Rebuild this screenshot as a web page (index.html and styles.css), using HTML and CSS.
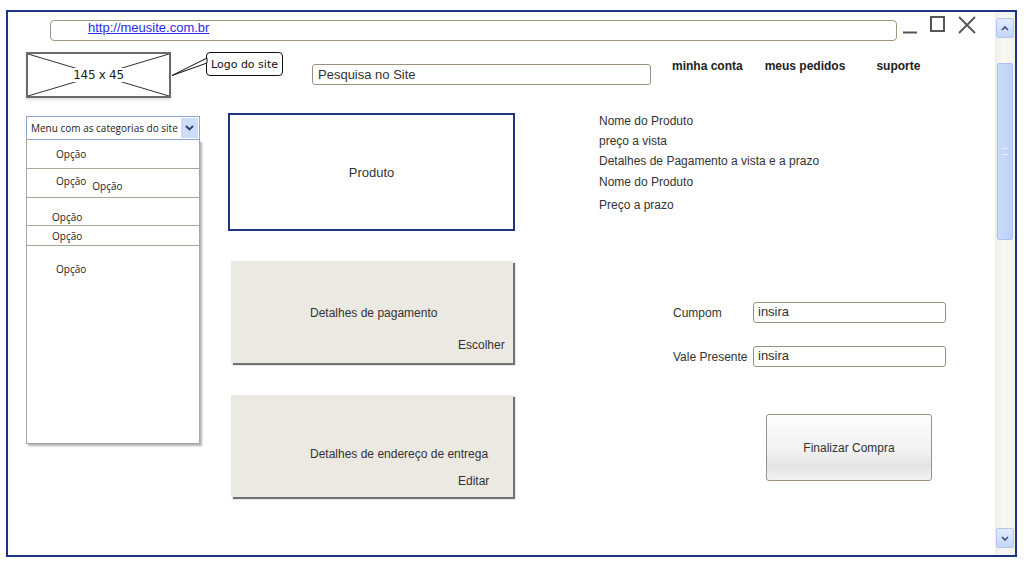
FILE: index.html
```html
<!DOCTYPE html>
<html lang="pt-BR">
<head>
<meta charset="utf-8">
<title>Finalizar compra</title>
<link rel="stylesheet" href="styles.css">
</head>
<body>
<div class="frame">
  <div class="main">
    <div class="topbar">
      <div class="address"><a href="#" class="url">http://meusite.com.br</a></div>
      <svg class="winctl" width="78" height="20" viewBox="0 0 78 20">
        <line x1="3" y1="17.5" x2="17" y2="17.5" stroke="#555" stroke-width="2"/>
        <rect x="31" y="2" width="13" height="14" fill="none" stroke="#555" stroke-width="2"/>
        <path d="M59 2 L75 18 M75 2 L59 18" stroke="#555" stroke-width="1.8" fill="none"/>
      </svg>
    </div>

    <div class="header">
      <div class="logo">
        <svg class="logo-x" viewBox="0 0 141 42" preserveAspectRatio="none">
          <line x1="0" y1="0" x2="141" y2="42" stroke="#333" stroke-width="1"/>
          <line x1="141" y1="0" x2="0" y2="42" stroke="#333" stroke-width="1"/>
        </svg>
        <span class="logo-size">145 x 45</span>
      </div>
      <div class="callout">
        <svg class="callout-tail" width="38" height="22" viewBox="0 0 38 22">
          <polygon points="37,2 2,19.5 37,7" fill="#fff" stroke="#111" stroke-width="1"/>
        </svg>
        <span>Logo do site</span>
      </div>
      <div class="search">Pesquisa no Site</div>
      <nav class="nav">
        <a href="#" class="nav-link">minha conta</a>
        <a href="#" class="nav-link nav-orders">meus pedidos</a>
        <a href="#" class="nav-link nav-support">suporte</a>
      </nav>
    </div>

    <div class="content">
      <aside class="menu">
        <div class="menu-head">
          <span>Menu com as categorias do site</span>
          <span class="menu-btn">
            <svg width="9" height="6" viewBox="0 0 9 6"><path d="M1 1 L4.5 4.5 L8 1" fill="none" stroke="#2b3d6e" stroke-width="1.8"/></svg>
          </span>
        </div>
        <div class="menu-list">
          <div class="opt opt-1">Opção</div>
          <div class="opt opt-2"><span>Opção</span><span class="opt-extra">Opção</span></div>
          <div class="opt opt-3">Opção</div>
          <div class="opt opt-4">Opção</div>
          <div class="opt opt-5">Opção</div>
        </div>
      </aside>

      <section class="middle">
        <div class="product">Produto</div>
        <div class="card card-pay">
          <div class="card-title">Detalhes de pagamento</div>
          <div class="card-action">Escolher</div>
        </div>
        <div class="card card-ship">
          <div class="card-title">Detalhes de endereço de entrega</div>
          <div class="card-action">Editar</div>
        </div>
      </section>

      <section class="right">
        <div class="info">
          <div class="info-line">Nome do Produto</div>
          <div class="info-line">preço a vista</div>
          <div class="info-line">Detalhes de Pagamento a vista e a prazo</div>
          <div class="info-line info-gap">Nome do Produto</div>
          <div class="info-line info-gap-lg">Preço a prazo</div>
        </div>
        <div class="form">
          <div class="field">
            <span class="field-label">Cumpom</span>
            <span class="field-input">insira</span>
          </div>
          <div class="field">
            <span class="field-label">Vale Presente</span>
            <span class="field-input">insira</span>
          </div>
        </div>
        <div class="finish">Finalizar Compra</div>
      </section>
    </div>
  </div>

  <div class="scrollbar">
    <div class="sb-btn">
      <svg width="8" height="5" viewBox="0 0 8 5"><path d="M1 4 L4 1 L7 4" fill="none" stroke="#3b4b7a" stroke-width="1.6"/></svg>
    </div>
    <div class="sb-thumb"><span class="sb-grip"></span></div>
    <div class="sb-space"></div>
    <div class="sb-btn">
      <svg width="8" height="5" viewBox="0 0 8 5"><path d="M1 1 L4 4 L7 1" fill="none" stroke="#3b4b7a" stroke-width="1.6"/></svg>
    </div>
  </div>
</div>
</body>
</html>
```

FILE: styles.css
```css
* { box-sizing: border-box; }

body {
  margin: 0;
  background: #fff;
  font-family: "Liberation Sans", Arial, sans-serif;
  color: #333;
}

a { color: inherit; text-decoration: none; }

.frame {
  margin: 10px 0 0 6px;
  width: 1011px;
  height: 547px;
  border: 2px solid #1d3482;
  display: flex;
}

.main { flex: 1; min-width: 0; }

/* top bar */
.topbar {
  display: flex;
  align-items: flex-start;
  padding: 8px 0 0 42px;
}
.address {
  width: 847px;
  height: 21px;
  border: 1px solid #a39583;
  border-radius: 4px;
  padding-left: 37px;
  font-size: 13px;
  line-height: 14px;
}
.url { color: #2b2bea; text-decoration: underline; }
.winctl { flex: none; margin: -5px 0 0 3px; }

/* header */
.header {
  display: flex;
  align-items: flex-start;
  margin-top: 11px;
  padding-left: 18px;
}
.logo {
  position: relative;
  width: 145px;
  height: 46px;
  border: 2px solid #6b6b6b;
  display: flex;
  align-items: center;
  justify-content: center;
  box-shadow: 0 2px 2px rgba(0, 0, 0, 0.12);
  font: 12px "DejaVu Sans", sans-serif;
  color: #222;
}
.logo-x { position: absolute; left: 0; top: 0; width: 100%; height: 100%; }
.logo-size {
  position: relative;
  background: #fff;
  line-height: 14px;
  padding: 0 1px;
  letter-spacing: -0.3px;
}

.callout {
  position: relative;
  margin-left: 35px;
  width: 77px;
  height: 24px;
  border: 1px solid #111;
  border-radius: 4px;
  background: #fff;
  display: flex;
  align-items: center;
  justify-content: center;
  font: 11px "DejaVu Sans", sans-serif;
  color: #111;
}
.callout-tail { position: absolute; left: -37px; top: 3px; }

.search {
  margin: 12px 0 0 29px;
  width: 339px;
  height: 21px;
  border: 1px solid #9e907e;
  border-radius: 3px;
  padding-left: 5px;
  font-size: 13px;
  line-height: 19px;
  color: #333;
}

.nav {
  display: flex;
  margin: 7px 0 0 21px;
  font-size: 12px;
  font-weight: bold;
  line-height: 14px;
  color: #222;
}
.nav-orders { margin-left: 22px; }
.nav-support { margin-left: 31px; }

/* content */
.content {
  display: flex;
  align-items: flex-start;
  margin-top: 11px;
  padding-left: 18px;
}

.menu {
  width: 174px;
  margin-top: 7px;
  font-family: "Open Sans", sans-serif;
  font-size: 10px;
  color: #222;
}
.menu-head {
  height: 24px;
  border: 1px solid #8aa5d2;
  display: flex;
  align-items: center;
  justify-content: space-between;
  padding: 0 1px 0 4px;
  white-space: nowrap;
}
.menu-btn {
  width: 17px;
  height: 20px;
  background: #cddcf7;
  display: flex;
  align-items: center;
  justify-content: center;
}
.menu-list {
  height: 304px;
  border: 1px solid #aaa596;
  border-top: none;
  display: flex;
  flex-direction: column;
  box-shadow: 2px 2px 2px rgba(0, 0, 0, 0.3);
  line-height: 14px;
}
.opt { border-bottom: 1px solid #aaa596; }
.opt-1 { height: 29px; padding: 7px 0 0 29px; }
.opt-2 { height: 29px; padding: 5px 0 0 29px; display: flex; align-items: flex-start; }
.opt-extra { margin: 5px 0 0 6px; }
.opt-3 { height: 28px; padding: 12px 0 0 25px; }
.opt-4 { height: 20px; padding: 3px 0 0 25px; }
.opt-5 { flex: 1; border-bottom: none; padding: 16px 0 0 29px; }

/* middle */
.middle { width: 287px; margin: 4px 0 0 28px; }
.product {
  height: 118px;
  border: 2px solid #1d3482;
  display: flex;
  align-items: center;
  justify-content: center;
  font-size: 13px;
  color: #333;
}
.card {
  width: 282px;
  height: 102px;
  margin-left: 3px;
  background: #ece9e2;
  box-shadow: 2px 2px 1px rgba(0, 0, 0, 0.55);
  padding-left: 79px;
  font-size: 12px;
  line-height: 14px;
  color: #333;
}
.card-pay { margin-top: 30px; padding-top: 45px; }
.card-ship { margin-top: 32px; padding-top: 52px; }
.card-action { margin-left: 148px; }
.card-pay .card-action { margin-top: 18px; }
.card-ship .card-action { margin-top: 13px; }

/* right */
.right { margin-left: 84px; }
.info { margin-top: 2px; }
.info-line { font-size: 12px; line-height: 20px; color: #333; }
.info-gap { margin-top: 1px; }
.info-gap-lg { margin-top: 3px; }

.form { margin-top: 87px; padding-left: 74px; }
.field { display: flex; align-items: center; }
.field + .field { margin-top: 23px; }
.field-label { width: 80px; font-size: 12px; color: #333; }
.field-input {
  width: 193px;
  height: 21px;
  border: 1px solid #9e907e;
  border-radius: 3px;
  padding-left: 4px;
  font-size: 13px;
  line-height: 17px;
  color: #333;
}

.finish {
  margin: 47px 0 0 167px;
  width: 166px;
  height: 67px;
  border: 1px solid #9e907e;
  border-radius: 3px;
  background: linear-gradient(#fdfdfd, #f1f1f1 55%, #e4e4e4 78%, #f3f3f3);
  display: flex;
  align-items: center;
  justify-content: center;
  font-size: 12px;
  color: #333;
}

/* scrollbar */
.scrollbar {
  width: 20px;
  display: flex;
  flex-direction: column;
  align-items: center;
  padding: 6px 0 7px;
  background: linear-gradient(90deg, #eeede6, #f9f8f4 45%, #f2f1eb);
}
.sb-btn {
  width: 18px;
  height: 20px;
  border: 1px solid #b3c7f4;
  border-radius: 2px;
  background: linear-gradient(#e3ecfd, #c4d5fa);
  display: flex;
  align-items: center;
  justify-content: center;
}
.sb-thumb {
  margin-top: 25px;
  width: 16px;
  height: 177px;
  border: 1px solid #a9c1f4;
  border-radius: 2px;
  background: linear-gradient(90deg, #cbdafb, #bdd0fa);
  display: flex;
  align-items: center;
  justify-content: center;
}
.sb-grip {
  width: 6px;
  height: 7px;
  border-top: 1px solid #e8efff;
  border-bottom: 1px solid #e8efff;
}
.sb-space { flex: 1; }
```
